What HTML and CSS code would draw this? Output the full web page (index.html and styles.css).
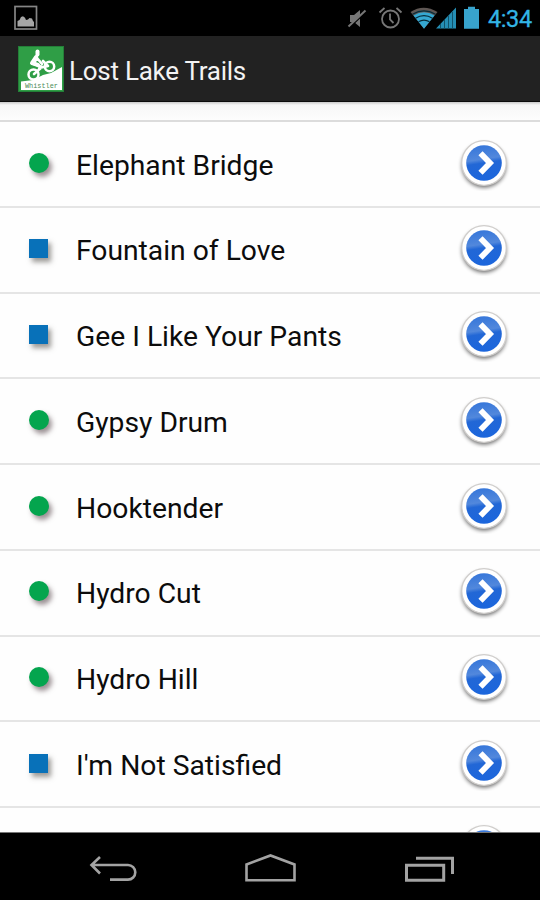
FILE: index.html
```
<!DOCTYPE html>
<html lang="en">
<head>
<meta charset="utf-8">
<title>Lost Lake Trails</title>
<link rel="stylesheet" href="styles.css">
</head>
<body>
<svg class="defs" width="0" height="0" aria-hidden="true">
  <defs>
    <linearGradient id="blue" x1="0" y1="0" x2="0.15" y2="1">
      <stop offset="0" stop-color="#3274da"/>
      <stop offset="0.45" stop-color="#5288dc"/>
      <stop offset="0.56" stop-color="#2267d6"/>
      <stop offset="1" stop-color="#1c66dc"/>
    </linearGradient>
    <filter id="soft" x="-30%" y="-30%" width="160%" height="160%"><feGaussianBlur stdDeviation="1.9"/></filter>
    <symbol id="go" viewBox="0 0 56 56">
      <circle cx="28" cy="30.500" r="22" fill="#000" opacity="0.6" filter="url(#soft)"/>
      <circle cx="28" cy="28" r="22.300" fill="#fff" stroke="#d0cecc" stroke-width="1.300"/>
      <circle cx="28" cy="28" r="17.800" fill="url(#blue)"/>
      <path d="M24.500 18.200L34 28L24.500 37.800" fill="none" stroke="#fff" stroke-width="5.800"/>
    </symbol>
  </defs>
</svg>
<div class="phone">
  <header class="status">
    <svg class="picture" width="24" height="26" viewBox="0 0 24 26">
      <rect x="1" y="1.500" width="21.500" height="22.500" fill="#000" stroke="#858585" stroke-width="1.700"/>
      <path d="M3.500 21.500V16l2-1 1.500-3 2-.8 2 1.600 1 2.200 2-.4 1.500-1.600 2.500.5 1 2.500 1 1v4.500z" fill="#a5a5a5"/>
    </svg>
    <svg class="signals" width="136" height="30" viewBox="346 4 136 30">
      <g fill="none" stroke="#777">
        <path d="M350 15h4l6-5v17l-6-5h-4z" fill="#777" stroke="none"/>
        <path d="M349.500 27.500L366.500 11.500" stroke="#000" stroke-width="1.500"/>
        <path d="M348.500 26.500L365.500 10.500" stroke-width="2"/>
        <circle cx="390.500" cy="19" r="8.500" stroke-width="1.800"/>
        <path d="M390 13.500v6l3.500 3.500M379.500 12.500l5-4.500M401.500 12.500l-5-4.500" stroke-width="1.800"/>
      </g>
      <path d="M410.500 12Q423.500 3.500 437.500 12L424 28.500z" fill="#5f5754"/>
      <path d="M413.500 15.500Q424 9 434.500 15.500L424 28.800z" fill="#35a8d2"/>
      <path d="M412.500 14.300Q424 7.500 435.500 14.300M415.500 18.200Q424 13.200 432.500 18.200M418.500 21.800Q424 18.600 429.500 21.800" fill="none" stroke="#062c3a" stroke-width="1.300"/>
      <path d="M436 28.500L456 7.500v21z" fill="#258eb4"/>
      <path d="M440.500 24v4.500M444.500 20v8.500M448.500 16v12.500M452.500 12v16.500" stroke="#11536b" stroke-width="1"/>
      <path d="M464 9h4V6.800h7V9h4v19.700h-15z" fill="#38a4cd"/>
    </svg>
    <span class="clock">4:34</span>
  </header>

  <div class="titlebar">
    <svg class="logo" width="46" height="46" viewBox="0 0 46 46">
      <rect x="0.500" y="0.500" width="45" height="45" fill="#2f9e46" stroke="#247f38"/>
      <path d="M3 44V35.500L15 34l10-5 8-2 11-6v23z" fill="#fff"/>
      <g fill="none" stroke="#fff" stroke-linejoin="round" stroke-linecap="round">
        <circle cx="15.500" cy="28.500" r="5" stroke-width="2.500" fill="#2f9e46"/>
        <circle cx="31.500" cy="20.500" r="4.700" stroke-width="2.500" fill="#2f9e46"/>
        <path d="M16 28l8-7-8-3 3-7M19 12l5 6M21 22l9-2-5-5" stroke-width="2.600"/>
        <path d="M18 11l-4 6 6 2" stroke-width="4"/>
        <path d="M19.500 5.500v3" stroke-width="4"/>
      </g>
      <text class="logo-text" x="7" y="42" textLength="33" lengthAdjust="spacingAndGlyphs">Whistler</text>
    </svg>
    <h1>Lost Lake Trails</h1>
  </div>

  <main class="list">
    <div class="sliver"></div>
    <div class="row"><i class="dot green"></i><span class="name">Elephant Bridge</span><svg class="go"><use href="#go"/></svg></div>
    <div class="row"><i class="dot blue"></i><span class="name">Fountain of Love</span><svg class="go"><use href="#go"/></svg></div>
    <div class="row"><i class="dot blue"></i><span class="name">Gee I Like Your Pants</span><svg class="go"><use href="#go"/></svg></div>
    <div class="row"><i class="dot green"></i><span class="name">Gypsy Drum</span><svg class="go"><use href="#go"/></svg></div>
    <div class="row"><i class="dot green"></i><span class="name">Hooktender</span><svg class="go"><use href="#go"/></svg></div>
    <div class="row"><i class="dot green"></i><span class="name">Hydro Cut</span><svg class="go"><use href="#go"/></svg></div>
    <div class="row"><i class="dot green"></i><span class="name">Hydro Hill</span><svg class="go"><use href="#go"/></svg></div>
    <div class="row"><i class="dot blue"></i><span class="name">I'm Not Satisfied</span><svg class="go"><use href="#go"/></svg></div>
    <div class="row"><span class="name"></span><svg class="go"><use href="#go"/></svg></div>
  </main>

  <nav class="navbar">
    <svg width="540" height="67" viewBox="0 833 540 67" fill="none" stroke="#a3a3a3" stroke-width="2.600">
      <path d="M100 857l-8.500 8 8.500 8.500M91.500 865H128a7.300 7.300 0 0 1 0 14.600H110"/>
      <path d="M246.500 864.500L270.500 855.500 294.500 864.500V880.300H246.500z"/>
      <path d="M406.500 865.300H443.700V880.300H406.500zM416 858.300H452.500V874" stroke-width="3"/>
    </svg>
  </nav>
</div>
</body>
</html>
```
FILE: styles.css
```
* { box-sizing: border-box; }
body { margin: 0; background: #000; font-family: Roboto, "Liberation Sans", sans-serif; }
svg { display: block; flex: none; }
.defs { position: absolute; }
.phone { width: 540px; height: 900px; display: flex; flex-direction: column; overflow: hidden; }
.status { height: 36px; flex: none; background: #000; display: flex; align-items: center; padding: 0 8px 0 14px; }
.signals { margin-left: auto; margin-top: 1px; }
.clock { width: 44px; margin-left: 6px; color: #33b5e5; font-size: 23.500px; line-height: 36px; padding-top: 2px; white-space: nowrap; -webkit-text-stroke: .3px #33b5e5; letter-spacing: -.4px; }
.titlebar { height: 66px; flex: none; background: #222; display: flex; align-items: center; padding: 2px 18px 1px; border-bottom: 1px solid #0c0c0c; }
.logo-text { font-family: "Liberation Mono", monospace; font-size: 7.500px; fill: #4c8c58; }
h1 { margin: 3px 0 0 5px; color: #f3f3f3; font-size: 26px; font-weight: 400; letter-spacing: -.26px; white-space: nowrap; }
.list { flex: 1; min-height: 0; overflow: hidden; background: #fefefe; border-bottom: 1px solid #777; }
.sliver { height: 20.300px; border-bottom: 2px solid #dcdcdc; background: linear-gradient(#c9c9c9, #f7f7f7 3px, #fdfdfd); }
.row { height: 85.720px; border-bottom: 2px solid #e5e5e5; display: flex; align-items: center; padding: 0 28px 0 29px; }
.dot { width: 20px; height: 20px; flex: none; margin-bottom: 3px; }
.green { background: #04a54e; border-radius: 50%; box-shadow: 3px 4px 5px rgba(60, 40, 45, .5); }
.blue { width: 19px; height: 19px; margin-right: 1px; margin-bottom: 2px; background: #0871b9; box-shadow: 3px 4px 5px rgba(60, 55, 50, .5); }
.name { flex: 1; margin: 3px 0 0 27px; color: #0c0c0c; font-size: 28.250px; line-height: 36px; white-space: nowrap; }
.go { width: 56px; height: 56px; margin-bottom: 3px; }
.navbar { height: 67px; flex: none; background: #000; }
```
